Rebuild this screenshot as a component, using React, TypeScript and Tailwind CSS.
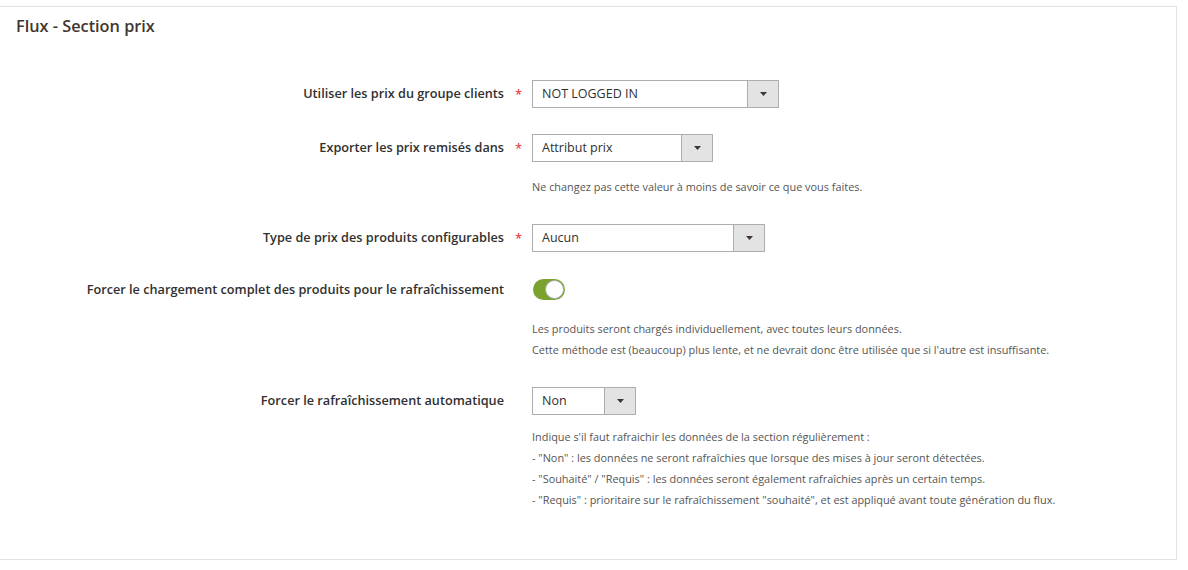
function Star() {
  return <span className="w-[28px] pl-[11px] text-[13px] leading-none text-[#e22626]">*</span>;
}

function Select({ value, width }: { value: string; width: string }) {
  return (
    <div className={`flex h-[28px] ${width} border border-[#adadad] bg-white`}>
      <div className="flex flex-1 items-center pl-[9px] text-[12.5px] text-[#303030]">{value}</div>
      <div className="flex w-[31px] items-center justify-center border-l border-[#adadad] bg-[#e3e3e3]">
        <svg width="7" height="4" viewBox="0 0 7 4">
          <path d="M0 0h7L3.5 4z" fill="#41362f" />
        </svg>
      </div>
    </div>
  );
}

function Row({
  label,
  required,
  children,
}: {
  label: string;
  required?: boolean;
  children: React.ReactNode;
}) {
  return (
    <div className="flex items-center">
      <div className="w-[504px] text-right text-[12.7px] font-semibold text-[#303030]">{label}</div>
      {required ? <Star /> : <span className="w-[28px]" />}
      {children}
    </div>
  );
}

function Note({ lines, className }: { lines: string[]; className?: string }) {
  return (
    <div className={`pl-[532px] text-[10.9px] leading-[21px] text-[#555] ${className ?? ''}`}>
      {lines.map((l) => (
        <div key={l}>{l}</div>
      ))}
    </div>
  );
}

export default function App() {
  return (
    <div className="h-[570px] bg-white pt-[6px] font-['Open_Sans',sans-serif]">
      <div className="h-[554px] w-[1177px] border-t border-r border-b border-[#e3e3e3] bg-white">
        {/* Header */}
        <h2 className="pl-[16px] pt-[9px] text-[16.3px] font-semibold leading-[21px] text-[#41362f]">
          Flux - Section prix
        </h2>

        <div className="mt-[43px] flex flex-col">
          <Row label="Utiliser les prix du groupe clients" required>
            <Select value="NOT LOGGED IN" width="w-[247px]" />
          </Row>
          <div className="mt-[26px]">
            <Row label="Exporter les prix remisés dans" required>
              <Select value="Attribut prix" width="w-[181px]" />
            </Row>
          </div>
          <Note className="mt-[14px]" lines={['Ne changez pas cette valeur à moins de savoir ce que vous faites.']} />
          <div className="mt-[27px]">
            <Row label="Type de prix des produits configurables" required>
              <Select value="Aucun" width="w-[233px]" />
            </Row>
          </div>
          <div className="mt-[27px]">
            <Row label="Forcer le chargement complet des produits pour le rafraîchissement">
              <div className="relative ml-[1px] h-[21px] w-[32px] rounded-full bg-[#79a22e]">
                <div className="absolute top-[1px] right-[1px] h-[19px] w-[19px] rounded-full border border-[#adadad] bg-white" />
              </div>
            </Row>
          </div>
          <Note
            className="mt-[18px]"
            lines={[
              'Les produits seront chargés individuellement, avec toutes leurs données.',
              "Cette méthode est (beaucoup) plus lente, et ne devrait donc être utilisée que si l'autre est insuffisante.",
            ]}
          />
          <div className="mt-[27px]">
            <Row label="Forcer le rafraîchissement automatique">
              <Select value="Non" width="w-[104px]" />
            </Row>
          </div>
          <Note
            className="mt-[11px]"
            lines={[
              "Indique s'il faut rafraichir les données de la section régulièrement :",
              '- "Non" : les données ne seront rafraîchies que lorsque des mises à jour seront détectées.',
              '- "Souhaité" / "Requis" : les données seront également rafraîchies après un certain temps.',
              '- "Requis" : prioritaire sur le rafraîchissement "souhaité", et est appliqué avant toute génération du flux.',
            ]}
          />
        </div>
      </div>
    </div>
  );
}
